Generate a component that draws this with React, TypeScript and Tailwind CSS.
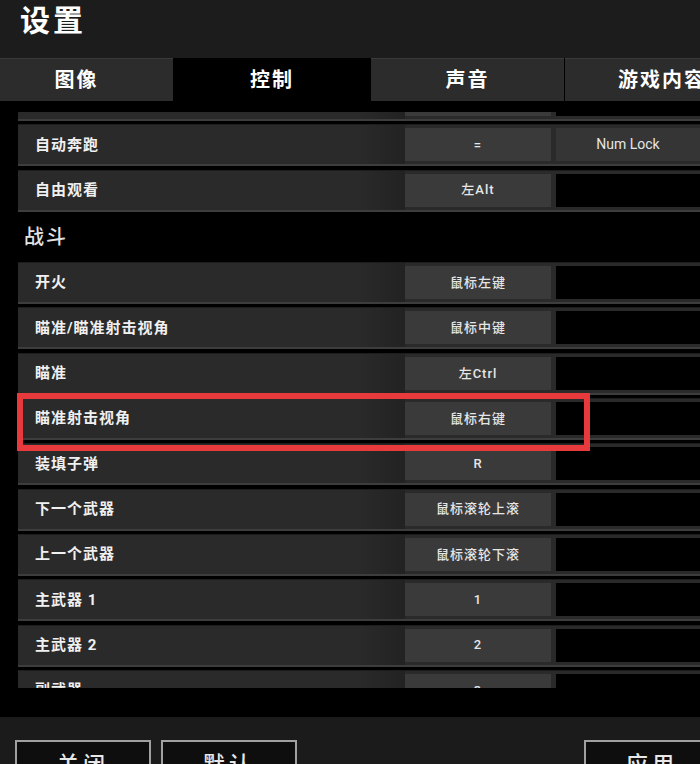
const font = { fontFamily: "Roboto, 'Noto Sans CJK SC', sans-serif" };

interface RowProps {
  label: string;
  k1?: string;
  k2?: string;
  highlight?: boolean;
}

const Row = ({ label, k1, k2, highlight }: RowProps) => (
  <div className="relative flex h-[42px] shrink-0 border-t border-b-2 border-t-[#1d1d1d] border-b-[#3d3d3d] bg-[#2a2a2a]">
    <div className="flex w-[387px] items-center bg-[linear-gradient(to_right,#2a2a2a_88%,#222222)] pl-[17px] text-[15px] font-bold tracking-[1px] text-[#f0f0f0]">
      {label}
    </div>
    <div className="my-[3px] flex w-[146px] items-center justify-center bg-[#3a3a3a] text-[13px] font-medium tracking-[1px] text-[#e6e6e6]">
      {k1}
    </div>
    <div
      className={`my-[3px] ml-[5px] flex flex-1 items-center justify-center text-[14px] text-[#e6e6e6] ${
        k2 ? 'bg-[#353535]' : 'bg-black'
      }`}
    >
      {k2}
    </div>
    {highlight && (
      <div className="absolute -left-px -top-[6px] z-10 h-[58px] w-[573px] border-[6px] border-[#e8393d]" />
    )}
  </div>
);

const tabs = [
  { name: '图像', w: 'w-[193px]', active: false },
  { name: '控制', w: 'w-[196px]', active: true },
  { name: '声音', w: 'w-[193px]', active: false },
  { name: '游戏内容', w: 'w-[194px]', active: false },
];

export default function App() {
  return (
    <div style={font} className="flex h-[764px] w-[700px] flex-col overflow-hidden bg-black">
      <div className="h-[58px] shrink-0 bg-[#1c1c1c] pl-[20px] pt-[3px]">
        <span className="text-[30px] font-bold leading-[1.2] tracking-[3px] text-white">设置</span>
      </div>

      <div className="-ml-[20px] flex h-[43px] shrink-0 gap-px bg-black">
        {tabs.map((t) => (
          <div
            key={t.name}
            className={`flex shrink-0 items-center justify-center text-[20px] font-bold tracking-[2px] text-white ${t.w} ${
              t.active ? 'bg-black' : 'border-t border-[#3a3a3a] bg-[#2c2c2c]'
            }`}
          >
            {t.name}
          </div>
        ))}
      </div>

      <div className="h-[11px] shrink-0" />

      <div className="h-[576px] shrink-0 overflow-hidden pl-[18px]">
        <div className="-mt-[33px] flex flex-col gap-[3.3px]">
          <Row label="自动跳跃" />
          <Row label="自动奔跑" k1="=" k2="Num Lock" />
          <Row label="自由观看" k1="左Alt" />
          <div className="flex h-[44px] shrink-0 items-center pl-[6px] text-[20px] font-medium tracking-[2px] text-[#e2e2e2]">
            战斗
          </div>
          <Row label="开火" k1="鼠标左键" />
          <Row label="瞄准/瞄准射击视角" k1="鼠标中键" />
          <Row label="瞄准" k1="左Ctrl" />
          <Row label="瞄准射击视角" k1="鼠标右键" highlight />
          <Row label="装填子弹" k1="R" />
          <Row label="下一个武器" k1="鼠标滚轮上滚" />
          <Row label="上一个武器" k1="鼠标滚轮下滚" />
          <Row label="主武器 1" k1="1" />
          <Row label="主武器 2" k1="2" />
          <Row label="副武器" k1="3" />
        </div>
      </div>

      <div className="h-[29px] shrink-0" />

      <div className="flex flex-1 items-start bg-[#1b1b1b] pt-[23px]">
        <div className="ml-[15px] flex h-[44px] w-[136px] justify-center border-2 border-[#a0a0a0] bg-[#0e0e0e] pt-[6px] text-[22px] font-medium tracking-[4px] text-[#e8e8e8]">
          关闭
        </div>
        <div className="ml-[10px] flex h-[44px] w-[136px] justify-center border-2 border-[#a0a0a0] bg-[#0e0e0e] pt-[6px] text-[22px] font-medium tracking-[4px] text-[#e8e8e8]">
          默认
        </div>
        <div className="ml-auto mr-[-20px] flex h-[44px] w-[136px] justify-center border-2 border-[#a0a0a0] bg-[#0e0e0e] pt-[6px] text-[22px] font-medium tracking-[4px] text-[#e8e8e8]">
          应用
        </div>
      </div>
    </div>
  );
}
